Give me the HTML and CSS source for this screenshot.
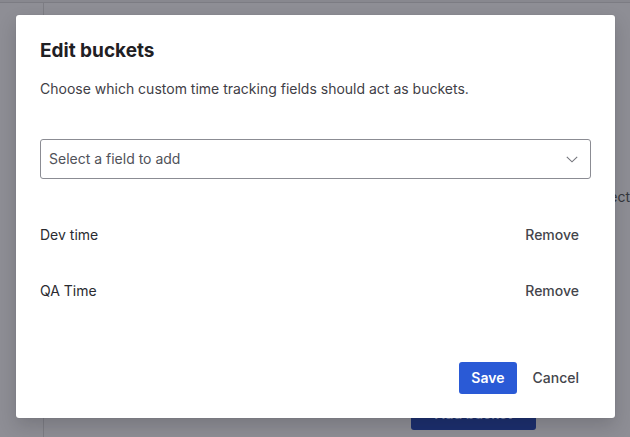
FILE: index.html
```html
<!DOCTYPE html>
<html lang="en">
<head>
<meta charset="utf-8">
<title>Edit buckets</title>
<link rel="stylesheet" href="styles.css">
</head>
<body>
<div class="page">
  <div class="topbar"></div>
  <div class="layout">
    <aside class="side"></aside>
    <main class="main">
      <div class="bg-text">Select</div>
      <button class="bg-button">Add bucket</button>
    </main>
  </div>
</div>

<div class="modal" role="dialog" aria-labelledby="title">
  <h1 class="title" id="title">Edit buckets</h1>
  <p class="desc">Choose which custom time tracking fields should act as buckets.</p>
  <div class="select">
    <span class="placeholder">Select a field to add</span>
    <svg class="chevron" width="12" height="7" viewBox="0 0 12 7" aria-hidden="true"><path d="M0.8 0.8 L6 5.8 L11.2 0.8" fill="none" stroke="#74757c" stroke-width="1.1"/></svg>
  </div>
  <ul class="list">
    <li class="row"><span class="name">Dev time</span><button class="subtle">Remove</button></li>
    <li class="row"><span class="name">QA Time</span><button class="subtle">Remove</button></li>
  </ul>
  <div class="footer">
    <button class="primary">Save</button>
    <button class="subtle">Cancel</button>
  </div>
</div>
</body>
</html>
```
FILE: styles.css
```css
* { box-sizing: border-box; }
html, body {
  margin: 0;
  padding: 0;
  width: 630px;
  height: 437px;
  overflow: hidden;
  font-family: Inter, "Noto Sans", "Liberation Sans", sans-serif;
  background: #8e8e95;
}
.page {
  width: 630px;
  height: 437px;
  display: flex;
  flex-direction: column;
  overflow: hidden;
}
.topbar {
  height: 3px;
  background: #88888f;
  border-bottom: 1px solid #7c7c83;
  flex: none;
}
.layout {
  flex: 1;
  display: flex;
}
.side {
  width: 44px;
  flex: none;
  border-right: 1px solid #7d7d84;
}
.main {
  flex: 1;
  display: flex;
  flex-direction: column;
  white-space: nowrap;
}
.bg-text {
  margin-top: 184px;
  align-self: flex-end;
  font-size: 14px;
  line-height: 20px;
  color: #35363b;
}
.bg-button {
  margin: 190px 0 0 367px;
  width: 125px;
  height: 33px;
  border: none;
  border-radius: 3px;
  background: #1b2e6e;
  color: #7d88ad;
  font: 600 14px/20px Inter, sans-serif;
  padding: 0;
}

.modal {
  position: absolute;
  left: 16px;
  top: 15px;
  width: 599px;
  height: 403px;
  background: #ffffff;
  border-radius: 3px;
  box-shadow: 0 8px 18px rgba(20, 20, 30, 0.18), 0 0 1px rgba(20, 20, 30, 0.2);
  padding: 24px;
  display: flex;
  flex-direction: column;
}
.title {
  margin: 0;
  font-size: 19px;
  line-height: 24px;
  font-weight: 700;
  color: #1f2024;
}
.desc {
  margin: 16px 0 0;
  font-size: 14px;
  line-height: 20px;
  color: #3f4046;
}
.select {
  margin-top: 40px;
  height: 40px;
  border: 1px solid #8b8c93;
  border-radius: 3px;
  display: flex;
  align-items: center;
  justify-content: space-between;
  padding: 0 12px 0 8px;
}
.placeholder {
  font-size: 14px;
  line-height: 20px;
  color: #505259;
}
.chevron { display: block; margin-top: 1px; }
.list {
  list-style: none;
  margin: 40px 0 0;
  padding: 0;
  display: flex;
  flex-direction: column;
  gap: 24px;
}
.row {
  display: flex;
  align-items: center;
  justify-content: space-between;
  height: 32px;
}
.name {
  font-size: 14px;
  line-height: 20px;
  color: #2a2b30;
}
button {
  font-family: Inter, "Noto Sans", "Liberation Sans", sans-serif;
  cursor: pointer;
}
.subtle {
  height: 32px;
  padding: 0 12px;
  border: none;
  border-radius: 3px;
  background: transparent;
  font-size: 14px;
  line-height: 20px;
  font-weight: 500;
  color: #44454b;
}
.footer {
  margin-top: auto;
  display: flex;
  justify-content: flex-end;
  gap: 4px;
}
.primary {
  height: 32px;
  padding: 0 12px;
  border: none;
  border-radius: 3px;
  background: #2a5ad6;
  color: #ffffff;
  font-size: 14px;
  line-height: 20px;
  font-weight: 600;
}
```
